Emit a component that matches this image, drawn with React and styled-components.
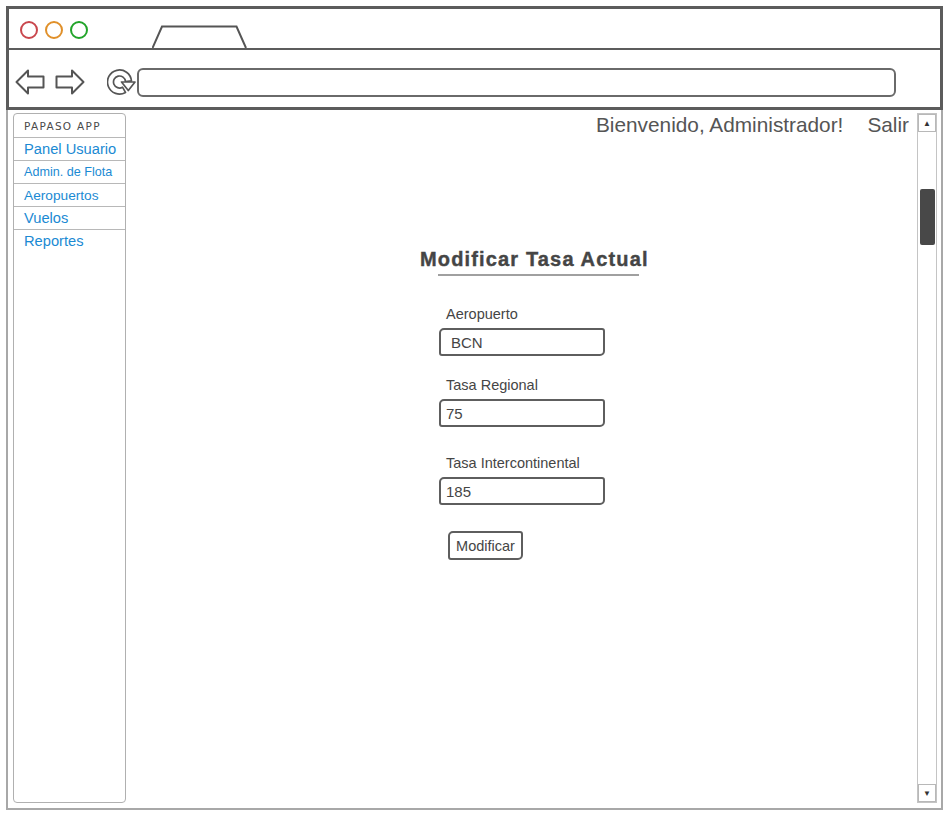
import React from 'react';
import styled, {createGlobalStyle} from 'styled-components';

const Global = createGlobalStyle`
  body {
    margin: 0;
    background: #fff;
    font-family: "Liberation Sans", Arial, sans-serif;
  }
`

const Window = styled.div`
  margin: 6px 0 0 6px;
  width: 937px;
  display: flex;
  flex-direction: column;
`

const TitleBar = styled.div`
  height: 44px;
  box-sizing: border-box;
  border: 3px solid #5c5c5c;
  border-bottom-width: 2px;
  display: flex;
  align-items: stretch;
  padding-left: 11px;
`

const Dots = styled.div`
  display: flex;
  gap: 7px;
  align-self: center;
  margin-top: 3px;
`

const Dot = styled.span`
  width: 14px;
  height: 14px;
  border-radius: 50%;
  border: 2.5px solid ${p => p.color};
`

const Tab = styled.svg`
  align-self: flex-end;
  margin-left: 64px;
  display: block;
`

const Toolbar = styled.div`
  height: 60px;
  box-sizing: border-box;
  border: 3px solid #5c5c5c;
  border-top: none;
  display: flex;
  align-items: center;
  padding: 7px 0 0 6px;
`

const NavIcon = styled.svg`
  display: block;
  flex-shrink: 0;
  margin-right: ${p => p.gap}px;
`

const AddressBar = styled.div`
  width: 759px;
  height: 29px;
  box-sizing: border-box;
  border: 2px solid #6a6a6a;
  border-radius: 6px;
`

const Content = styled.div`
  height: 700px;
  box-sizing: border-box;
  border: 2px solid #a8a8a8;
  border-top: none;
  padding: 3px 4px 5px 5px;
  display: flex;
`

const Sidebar = styled.div`
  width: 113px;
  box-sizing: border-box;
  border: 1.5px solid #b0b0b0;
  border-radius: 4px;
  display: flex;
  flex-direction: column;
`

const SideHead = styled.div`
  height: 23px;
  border-bottom: 1px solid #b8b8b8;
  padding-left: 10px;
  font-family: "DejaVu Sans", sans-serif;
  font-size: 10.5px;
  letter-spacing: 1.3px;
  color: #4a4a4a;
  display: flex;
  align-items: center;
`

const SideItem = styled.div`
  height: 22px;
  border-bottom: ${p => (p.last ? 'none' : '1px solid #b8b8b8')};
  padding-left: 10px;
  color: #1b8ad3;
  font-size: ${p => p.size}px;
  display: flex;
  align-items: center;
  white-space: nowrap;
  overflow: hidden;
`

const Main = styled.div`
  flex: 1;
  display: flex;
  flex-direction: column;
`

const Header = styled.div`
  display: flex;
  justify-content: flex-end;
  gap: 24px;
  padding: 0 8px 0 0;
  font-size: 20.8px;
  line-height: 24px;
  color: #555;
`

const FormPanel = styled.div`
  margin: 110px 0 0 294px;
  display: flex;
  flex-direction: column;
  align-items: flex-start;
`

const Title = styled.h2`
  margin: 0;
  font-size: 20px;
  line-height: 24px;
  font-weight: bold;
  color: #454545;
  letter-spacing: 1.15px;
  -webkit-text-stroke: 0.4px #454545;
`

const Underline = styled.div`
  margin: 3px 0 0 18px;
  width: 201px;
  height: 2px;
  background: #a0a0a0;
`

const Field = styled.div`
  margin: ${p => p.top}px 0 0 19px;
  display: flex;
  flex-direction: column;
`

const Label = styled.label`
  padding-left: 7px;
  font-size: 14.5px;
  line-height: 18px;
  color: #454545;
  margin-bottom: 5px;
`

const Input = styled.div`
  width: 166px;
  height: 28px;
  box-sizing: border-box;
  border: 2px solid #5e5e5e;
  border-radius: 5px 3px 5px 3px;
  padding-left: ${p => p.indent}px;
  display: flex;
  align-items: center;
  font-size: 15px;
  color: #454545;
`

const Button = styled.div`
  margin: 26px 0 0 28px;
  width: 75px;
  height: 29px;
  box-sizing: border-box;
  border: 2px solid #5e5e5e;
  border-radius: 5px 3px 5px 3px;
  display: flex;
  align-items: center;
  justify-content: center;
  font-size: 14.5px;
  color: #454545;
`

const Scrollbar = styled.div`
  width: 20px;
  box-sizing: border-box;
  border: 1px solid #c4c4c4;
  display: flex;
  flex-direction: column;
  align-items: center;
`

const ScrollBtn = styled.div`
  width: 18px;
  height: 18px;
  box-sizing: border-box;
  border: 1px solid #b8b8b8;
  display: flex;
  align-items: center;
  justify-content: center;
  font-size: 8px;
  color: #333;
`

const Track = styled.div`
  flex: 1;
  width: 100%;
  padding-top: 57px;
  display: flex;
  justify-content: center;
`

const Thumb = styled.div`
  width: 15px;
  height: 56px;
  background: #484848;
  border-radius: 2px;
`

const fields = [
    {label: 'Aeropuerto', value: 'BCN', indent: 10, top: 29},
    {label: 'Tasa Regional', value: '75', indent: 5, top: 20},
    {label: 'Tasa Intercontinental', value: '185', indent: 5, top: 27},
]

export default function App() {
    return (
        <>
        <Global />
        <Window>
            <TitleBar>
                <Dots>
                    <Dot color="#c9474d" />
                    <Dot color="#e0902a" />
                    <Dot color="#22a42a" />
                </Dots>
                <Tab width="95" height="23" viewBox="0 0 95 23">
                    <path d="M0.5 23 L10 1.5 L84.5 1.5 L94 23" fill="none" stroke="#555" strokeWidth="2" />
                </Tab>
            </TitleBar>
            <Toolbar>
                <NavIcon width="30" height="26" viewBox="0 0 30 26" gap={10}>
                    <path d="M1.5 13 L13 1.5 L13 7.5 L28.5 7.5 L28.5 18.5 L13 18.5 L13 24.5 Z" fill="none" stroke="#555" strokeWidth="2" strokeLinejoin="round" />
                </NavIcon>
                <NavIcon width="30" height="26" viewBox="0 0 30 26" gap={22}>
                    <path d="M28.5 13 L17 1.5 L17 7.5 L1.5 7.5 L1.5 18.5 L17 18.5 L17 24.5 Z" fill="none" stroke="#555" strokeWidth="2" strokeLinejoin="round" />
                </NavIcon>
                <NavIcon width="29" height="30" viewBox="0 0 29 30" gap={1}>
                    <path d="M18.5 25.4 A12 12 0 1 1 24.45 13.95 L18.48 14.48 A6 6 0 1 0 15.5 20.2 Z" fill="#fff" stroke="#555" strokeWidth="1.7" strokeLinejoin="round" />
                    <path d="M14.5 15 L28 15 L21.3 23.5 Z" fill="#fff" stroke="#555" strokeWidth="1.7" strokeLinejoin="round" />
                </NavIcon>
                <AddressBar />
            </Toolbar>
            <Content>
                <Sidebar>
                    <SideHead>PAPASO APP</SideHead>
                    <SideItem size={14.7}>Panel Usuario</SideItem>
                    <SideItem size={12.6}>Admin. de Flota</SideItem>
                    <SideItem size={13.7}>Aeropuertos</SideItem>
                    <SideItem size={14.7}>Vuelos</SideItem>
                    <SideItem size={14.7} last>Reportes</SideItem>
                </Sidebar>
                <Main>
                    <Header>
                        <span>Bienvenido, Administrador!</span>
                        <span>Salir</span>
                    </Header>
                    <FormPanel>
                        <Title>Modificar Tasa Actual</Title>
                        <Underline />
                        {fields.map(f => (
                            <Field key={f.label} top={f.top}>
                                <Label>{f.label}</Label>
                                <Input indent={f.indent}>{f.value}</Input>
                            </Field>
                        ))}
                        <Button>Modificar</Button>
                    </FormPanel>
                </Main>
                <Scrollbar>
                    <ScrollBtn>▲</ScrollBtn>
                    <Track><Thumb /></Track>
                    <ScrollBtn>▼</ScrollBtn>
                </Scrollbar>
            </Content>
        </Window>
        </>
    )
}
